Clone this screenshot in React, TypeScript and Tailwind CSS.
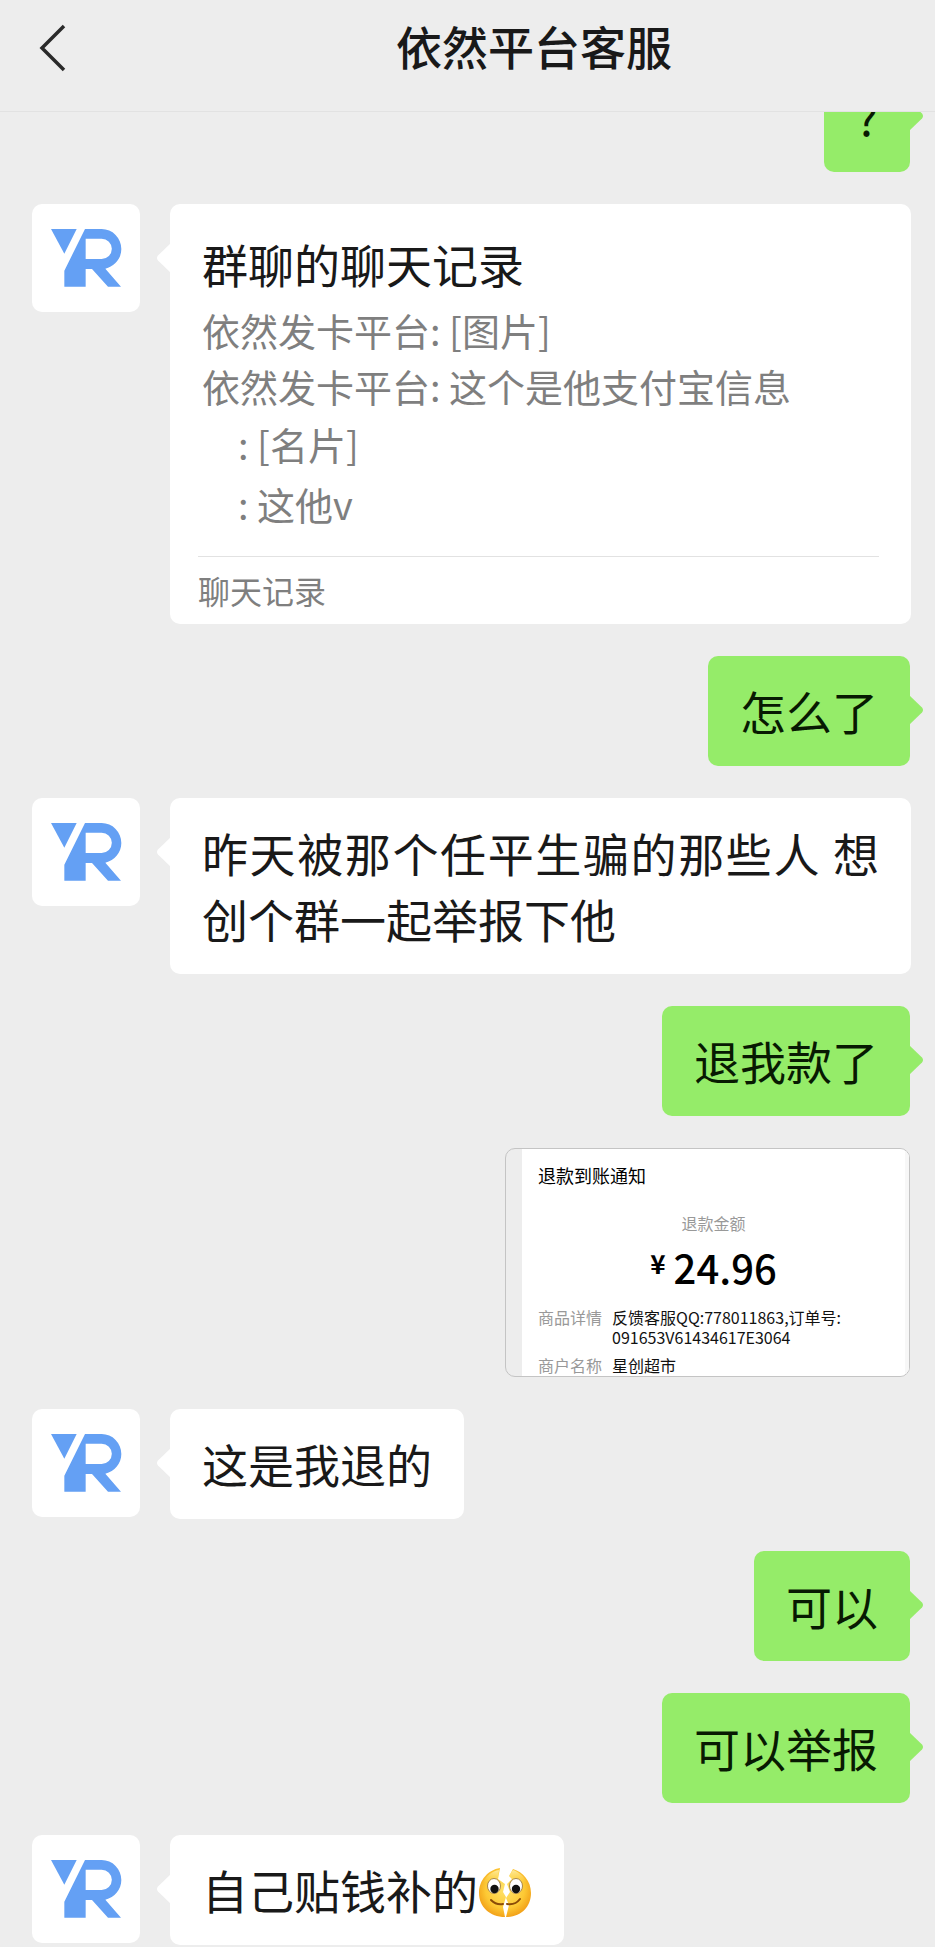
import type { ReactNode } from 'react'

type Message = {
  id: number
  from: 'me' | 'them'
  kind: 'text' | 'record' | 'refund'
  text?: string
  emoji?: boolean
}

const messages: Message[] = [
  { id: 1, from: 'me', kind: 'text', text: '?' },
  { id: 2, from: 'them', kind: 'record' },
  { id: 3, from: 'me', kind: 'text', text: '怎么了' },
  { id: 4, from: 'them', kind: 'text', text: '昨天被那个任平生骗的那些人 想创个群一起举报下他' },
  { id: 5, from: 'me', kind: 'text', text: '退我款了' },
  { id: 6, from: 'me', kind: 'refund' },
  { id: 7, from: 'them', kind: 'text', text: '这是我退的' },
  { id: 8, from: 'me', kind: 'text', text: '可以' },
  { id: 9, from: 'me', kind: 'text', text: '可以举报' },
  { id: 10, from: 'them', kind: 'text', text: '自己贴钱补的', emoji: true },
]

function Avatar() {
  return (
    <div className="size-[108px] shrink-0 overflow-hidden rounded-[10px] bg-white">
      <svg viewBox="0 0 324 324" className="size-full" fill="#64a0f4" aria-hidden="true">
        <path d="M57 75H134L97 149Z" />
        <path
          fillRule="evenodd"
          d="M159 75H209A60 60 0 0 1 268 135C268 164 248 187 220 194L267 248H228L180 195H161V248H97V200ZM161 104V165H209A30 30 0 0 0 209 104Z"
        />
      </svg>
    </div>
  )
}

function SplitFace() {
  return (
    <svg viewBox="0 0 54 54" className="-mt-3 -mb-1 inline-block size-[54px] align-middle" role="img" aria-label="裂开">
      <defs>
        <radialGradient id="face" gradientUnits="userSpaceOnUse" cx="27" cy="23" r="30">
          <stop offset="0%" stopColor="#ffe36b" />
          <stop offset="65%" stopColor="#fdc934" />
          <stop offset="100%" stopColor="#f09a14" />
        </radialGradient>
        <linearGradient id="shine" x1="0" y1="0" x2="0" y2="1">
          <stop offset="0%" stopColor="#fff3b8" stopOpacity="0.8" />
          <stop offset="100%" stopColor="#ffe36b" stopOpacity="0" />
        </linearGradient>
      </defs>
      <path
        d="M22 2C10 4 1 14 1 27C1 41 12 51 27 51L25 41L28 31L25 26L27 18L20 13Z"
        fill="url(#face)"
      />
      <path
        d="M35 3C45 6 53 15 53 27C53 41 43 51 28 51L31 39L28 32L32 26L29 18L34 13L31 10Z"
        fill="url(#face)"
      />
      <path d="M21 4C14 5 8 10 5 17H25L20 13Z" fill="url(#shine)" />
      <path d="M35 4C41 6 46 10 49 17H30L34 13L31 10Z" fill="url(#shine)" />
      <ellipse cx="16" cy="20" rx="6.5" ry="7.5" fill="#fff" stroke="#a98648" strokeWidth="1" />
      <ellipse cx="38" cy="20" rx="6.5" ry="7.5" fill="#fff" stroke="#a98648" strokeWidth="1" />
      <circle cx="16.5" cy="23" r="4.2" fill="#111" />
      <circle cx="38" cy="23" r="4.2" fill="#111" />
      <path
        d="M13 34C16 37 20 39 25 38M29 38C35 39 39 37 42 33"
        fill="none"
        stroke="#8a4b08"
        strokeWidth="2"
        strokeLinecap="round"
      />
    </svg>
  )
}

// Small pointer on the side of a bubble
function Tail({ side }: { side: 'left' | 'right' }) {
  if (side === 'left') {
    return (
      <svg viewBox="0 0 14 30" className="absolute top-[39px] -left-[13px] h-[30px] w-3.5" fill="#fff" aria-hidden="true">
        <path d="M14 0L1 12.5Q-1 15 1 17.5L14 30Z" />
      </svg>
    )
  }
  return (
    <svg viewBox="0 0 14 30" className="absolute top-[39px] -right-[13px] h-[30px] w-3.5" fill="#95ec69" aria-hidden="true">
      <path d="M0 0L13 12.5Q15 15 13 17.5L0 30Z" />
    </svg>
  )
}

function Bubble({ from, children }: { from: 'me' | 'them'; children: ReactNode }) {
  return from === 'me' ? (
    <div className="relative rounded-[10px] bg-[#95ec69] px-8 pt-[21px] pb-[23px] text-[46px] leading-[66px] text-[#081a02]">
      <Tail side="right" />
      {children}
    </div>
  ) : (
    <div className="relative rounded-[10px] bg-white px-8 pt-[21px] pb-[23px] text-justify text-[46px] leading-[66px] text-[#191919]">
      <Tail side="left" />
      {children}
    </div>
  )
}

function RecordCard() {
  return (
    <div className="relative flex-1 rounded-[10px] bg-white pt-[26px] pr-8 pl-7">
      <Tail side="left" />
      <div className="pl-1">
        <h2 className="text-[46px] leading-[66px] text-[#191919]">群聊的聊天记录</h2>
        <div className="mt-1.5 text-[38px] text-[#7f7f7f]">
          <p className="leading-[56px]">依然发卡平台: [图片]</p>
          <p className="leading-[56px]">依然发卡平台: 这个是他支付宝信息</p>
          <p className="pl-9 leading-[60px]">: [名片]</p>
          <p className="pl-9 leading-[60px]">: 这他v</p>
        </div>
      </div>
      <div className="mt-[22px] border-t border-[#e2e2e2] text-[32px] leading-[67px] text-[#7f7f7f]">聊天记录</div>
    </div>
  )
}

function RefundShot() {
  return (
    <div className="h-[229px] w-[405px] overflow-hidden rounded-[10px] border border-[#c4c4c4] bg-[#ededed] pl-4">
      <div className="h-full border-r-4 border-[#f7f7f7] bg-white px-4 pt-3.5 text-base">
        <h3 className="text-lg leading-6 text-black">退款到账通知</h3>
        <p className="mt-6 text-center leading-6 text-[#999]">退款金额</p>
        <p className="flex items-start justify-center gap-2 font-medium text-black">
          <span className="pt-2 text-[26px] leading-10 font-bold">¥</span>
          <span className="text-[40px] leading-[64px]">24.96</span>
        </p>
        <dl className="mt-2 leading-5">
          <div className="flex gap-2.5">
            <dt className="shrink-0 text-[#999]">商品详情</dt>
            <dd className="text-[#111]">
              反馈客服QQ:778011863,订单号:
              <br />
              091653V61434617E3064
            </dd>
          </div>
          <div className="mt-2 flex gap-2.5">
            <dt className="shrink-0 text-[#999]">商户名称</dt>
            <dd className="text-[#111]">星创超市</dd>
          </div>
        </dl>
      </div>
    </div>
  )
}

function MessageRow({ message }: { message: Message }) {
  let body: ReactNode
  if (message.kind === 'record') {
    body = <RecordCard />
  } else if (message.kind === 'refund') {
    body = <RefundShot />
  } else {
    body = (
      <Bubble from={message.from}>
        {message.text}
        {message.emoji && <SplitFace />}
      </Bubble>
    )
  }

  if (message.from === 'me') {
    return <li className="flex justify-end pr-px pl-[140px]">{body}</li>
  }
  return (
    <li className="flex items-start gap-[30px]">
      <Avatar />
      {body}
    </li>
  )
}

function App() {
  return (
    <div className="min-h-screen bg-[#ededed] font-['Noto_Sans_CJK_SC',sans-serif]">
      <header className="flex h-28 items-center border-b border-[#e2e2e2] pb-4">
        <button type="button" aria-label="返回" className="w-[133px] shrink-0 pl-9">
          <svg viewBox="0 0 32 48" className="h-12 w-8" fill="none" stroke="#2a2a2a" strokeWidth="3.5" aria-hidden="true">
            <path d="M28 2L6 24L28 46" />
          </svg>
        </button>
        <h1 className="flex-1 pb-1.5 text-center text-[46px] leading-[66px] font-medium text-[#191919]">依然平台客服</h1>
      </header>

      {/* the first message is scrolled half way under the header */}
      <main className="overflow-hidden">
        <ul className="-mt-[50px] flex flex-col gap-8 pr-6 pl-8">
          {messages.map((message) => (
            <MessageRow key={message.id} message={message} />
          ))}
        </ul>
      </main>
    </div>
  )
}

export default App
